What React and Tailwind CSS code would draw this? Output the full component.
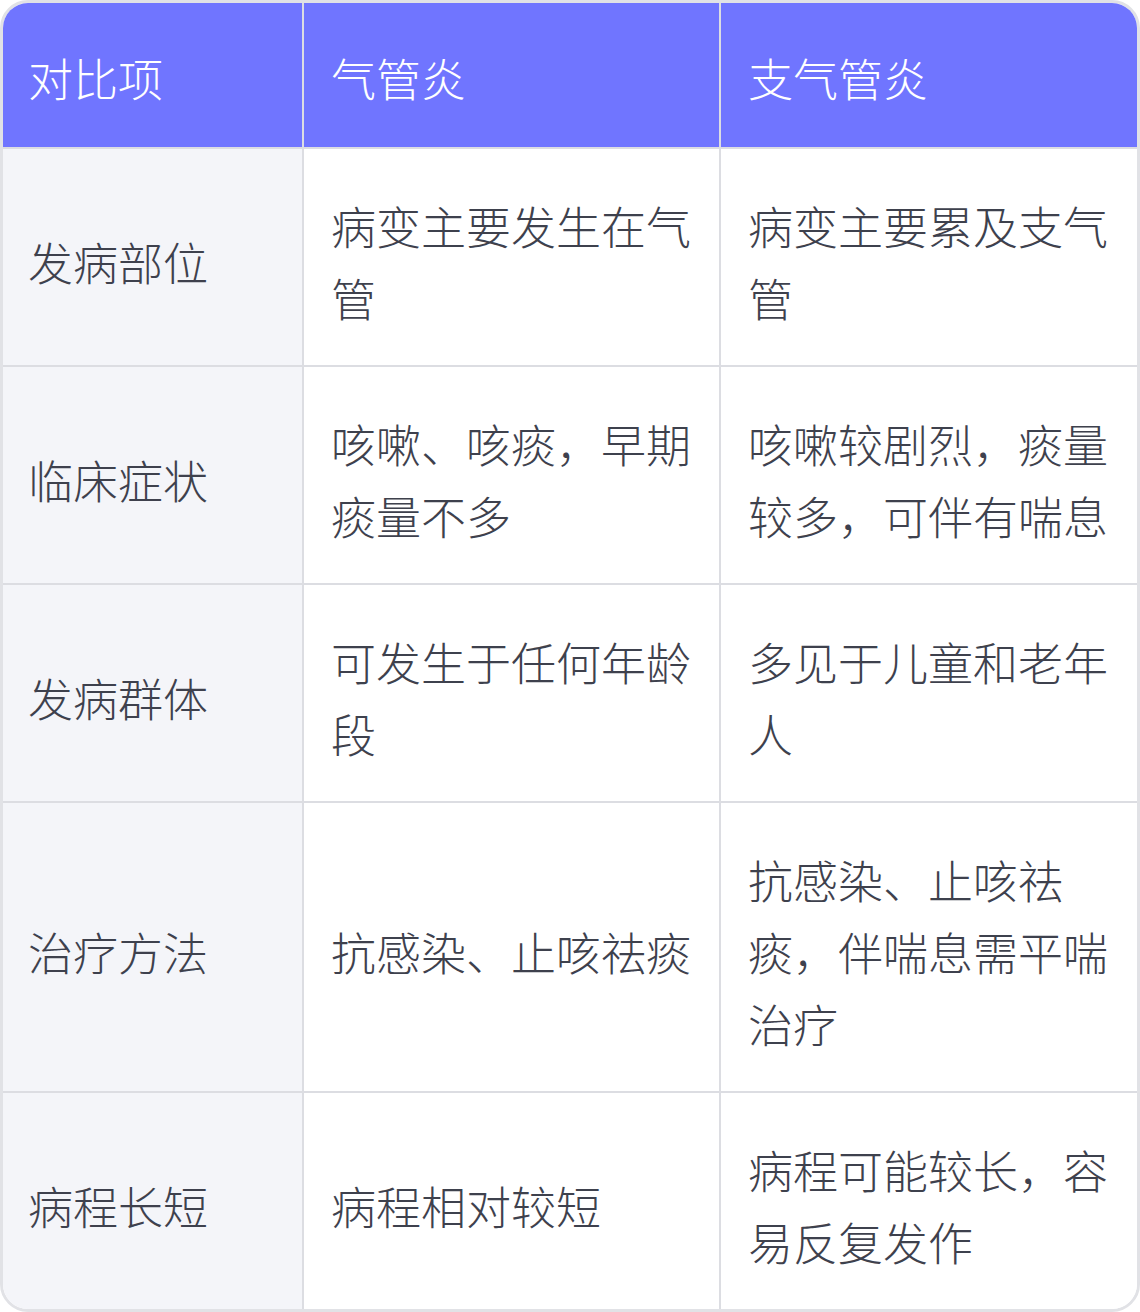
import React from "react";

const rows = [
  ["发病部位", "病变主要发生在气管", "病变主要累及支气管"],
  ["临床症状", "咳嗽、咳痰，早期痰量不多", "咳嗽较剧烈，痰量较多，可伴有喘息"],
  ["发病群体", "可发生于任何年龄段", "多见于儿童和老年人"],
  ["治疗方法", "抗感染、止咳祛痰", "抗感染、止咳祛痰，伴喘息需平喘治疗"],
  ["病程长短", "病程相对较短", "病程可能较长，容易反复发作"],
];

const head = ["对比项", "气管炎", "支气管炎"];

export default function App() {
  return (
    <div
      className="w-[1140px] h-[1312px] bg-white"
      style={{ fontFamily: '"Noto Sans CJK SC", "Noto Sans", sans-serif' }}
    >
      <div className="w-[1140px] overflow-hidden rounded-[28px] border-[3px] border-[#e1e2e6] bg-white">
        <table className="w-full table-fixed border-collapse text-[45px] font-light leading-[72px]">
          <colgroup>
            <col className="w-[300px]" />
            <col className="w-[417px]" />
            <col />
          </colgroup>
          <thead>
            <tr className="bg-[#7075ff] text-white">
              {head.map((h, i) => (
                <th
                  key={i}
                  className={
                    "h-[145px] border-b-2 border-[#dcdde2] pr-[27px] pt-[6px] text-left align-middle font-light " +
                    (i === 0 ? "pl-[25px] " : "pl-[27px] ") +
                    (i < 2 ? "border-r-2" : "")
                  }
                >
                  {h}
                </th>
              ))}
            </tr>
          </thead>
          <tbody className="text-[#3e414d]">
            {rows.map((r, ri) => (
              <tr key={ri}>
                {r.map((c, ci) => (
                  <td
                    key={ci}
                    className={
                      "pr-[27px] pt-[41px] pb-[31px] align-middle " +
                      (ci === 0 ? "bg-[#f4f5f9] pl-[25px] " : "bg-white pl-[27px] ") +
                      (ci < 2 ? "border-r-2 border-[#dcdde2] " : "") +
                      (ri < rows.length - 1 ? "border-b-2 border-[#dcdde2]" : "")
                    }
                  >
                    {c}
                  </td>
                ))}
              </tr>
            ))}
          </tbody>
        </table>
      </div>
    </div>
  );
}
